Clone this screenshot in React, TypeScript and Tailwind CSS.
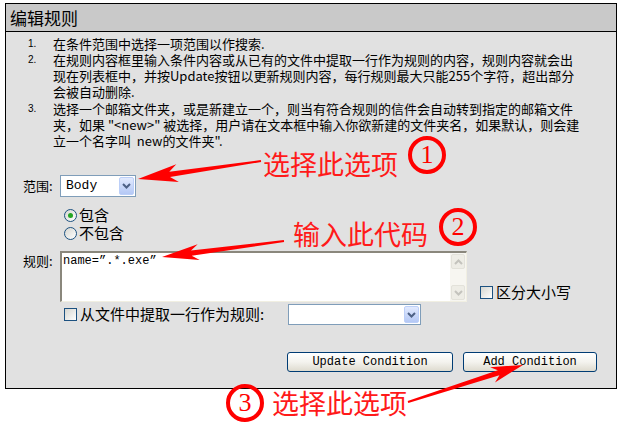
import React from "react";

const cjk = "font-['Noto_Sans_CJK_SC','Noto_Sans',sans-serif]";
const mono = "font-['Liberation_Mono',monospace]";

type Pt = [number, number];

const Chevron = ({ up = false, color = "#4d6185" }: { up?: boolean; color?: string }) => (
  <svg width="9" height="6" viewBox="0 0 9 6">
    <path
      d={up ? "M1 5 L4.5 1.5 L8 5" : "M1 1 L4.5 4.5 L8 1"}
      fill="none"
      stroke={color}
      strokeWidth="2"
    />
  </svg>
);

const ComboBox = ({ value, className }: { value?: string; className: string }) => (
  <div className={`flex items-stretch border border-[#7f9db9] bg-white p-[1px] ${className}`}>
    <span className={`flex flex-1 items-center pl-[4px] text-[13px] text-black ${mono}`}>{value}</span>
    <span className="flex w-[15px] items-center justify-center rounded-[2px] border border-[#bccff8] bg-gradient-to-b from-[#e2eafe] to-[#b4c8f5]">
      <Chevron />
    </span>
  </div>
);

const Radio = ({ checked }: { checked?: boolean }) => (
  <span className="flex h-[13px] w-[13px] items-center justify-center rounded-full border border-[#1c5180] bg-gradient-to-br from-[#d6d6d0] to-white">
    {checked && <span className="h-[5px] w-[5px] rounded-full bg-[#24a524]" />}
  </span>
);

const Checkbox = () => (
  <span className="block h-[13px] w-[13px] border border-[#1c5180] bg-gradient-to-br from-[#d6d6d0] to-white" />
);

const XpButton = ({ label, className }: { label: string; className: string }) => (
  <button
    className={`flex h-[20px] items-center justify-center rounded-[3px] border border-[#003c74] bg-gradient-to-b from-white via-[#f4f3ee] to-[#dedbcf] text-[12px] text-black ${mono} ${className}`}
  >
    {label}
  </button>
);

// tapered red arrow drawn from the tail toward the tip
const Arrow = ({ tip, tail, head, wing }: { tip: Pt; tail: Pt; head: number; wing: number }) => {
  const dx = tail[0] - tip[0];
  const dy = tail[1] - tip[1];
  const len = Math.hypot(dx, dy);
  const ang = (Math.atan2(dy, dx) * 180) / Math.PI;
  const pts: Pt[] = [
    [0, 0],
    [head, -wing],
    [head * 0.8, -2.6],
    [len, -1],
    [len, 1],
    [head * 0.8, 2.6],
    [head, wing],
  ];
  return (
    <polygon
      transform={`translate(${tip[0]} ${tip[1]}) rotate(${ang})`}
      points={pts.map((p) => p.join(",")).join(" ")}
      fill="#ff0000"
    />
  );
};

const Badge = ({ n, className }: { n: string; className: string }) => (
  <div
    className={`absolute flex h-[38px] w-[38px] items-center justify-center rounded-full border-[4px] border-[#ff0000] text-[26px] leading-none text-[#ff0000] font-['Liberation_Serif',serif] ${className}`}
  >
    {n}
  </div>
);

const Note = ({ text, className }: { text: string; className: string }) => (
  <div className={`absolute whitespace-nowrap text-[27px] leading-[27px] text-[#ff1a1a] ${cjk} ${className}`}>
    {text}
  </div>
);

const steps: string[][] = [
  ["在条件范围中选择一项范围以作搜索."],
  [
    "在规则内容框里输入条件内容或从已有的文件中提取一行作为规则的内容，规则内容就会出",
    "现在列表框中，并按Update按钮以更新规则内容，每行规则最大只能255个字符，超出部分",
    "会被自动删除.",
  ],
  [
    "选择一个邮箱文件夹，或是新建立一个，则当有符合规则的信件会自动转到指定的邮箱文件",
    "夹，如果 \"<new>\" 被选择，用户请在文本框中输入你欲新建的文件夹名，如果默认，则会建",
    "立一个名字叫  new的文件夹\".",
  ],
];

export default function App() {
  return (
    <div className={`relative h-[427px] w-[621px] overflow-hidden bg-white text-black ${cjk}`}>
      <div className="ml-[5px] mt-[3px] w-[612px] border border-black">
        <div className="flex h-[28px] items-center border-b border-black bg-[#c9c9c9] pl-[4px] text-[17px]">
          编辑规则
        </div>

        <div className="h-[356px] bg-[#e1e1e1] pt-[4px]">
          <div className="flex flex-col">
            {steps.map((lines, i) => (
              <div key={i} className={`flex pl-[22px] ${i === 2 ? "mt-[1px]" : ""}`}>
                <span className="w-[25px] text-[10px] leading-[16px] font-['Liberation_Sans',sans-serif]">
                  {i + 1}.
                </span>
                <div className="flex flex-col text-[13px] leading-[16px]">
                  {lines.map((l) => (
                    <span key={l} className="whitespace-pre">
                      {l}
                    </span>
                  ))}
                </div>
              </div>
            ))}
          </div>

          <div className="mt-[26px] flex h-[22px] items-center pl-[17px]">
            <span className="w-[37px] text-[13px]">范围:</span>
            <ComboBox value="Body" className="h-[22px] w-[76px]" />
          </div>

          <div className="mt-[9px] flex flex-col pl-[58px] text-[15px]">
            <label className="flex h-[18px] items-center gap-[2px]">
              <Radio checked />
              包含
            </label>
            <label className="flex h-[18px] items-center gap-[2px]">
              <Radio />
              不包含
            </label>
          </div>

          <div className="mt-[9px] flex pl-[17px]">
            <span className="w-[37px] text-[13px] leading-[20px]">规则:</span>
            <div className="flex h-[51px] w-[407px] border-b border-l-2 border-r border-t-2 border-b-[#f1efe2] border-l-[#8a877c] border-r-[#f1efe2] border-t-[#8a877c] bg-white">
              <div className={`flex-1 pl-[1px] text-[12px] leading-[16px] ${mono}`}>name=”.*.exe”</div>
              <div className="flex w-[16px] flex-col justify-between bg-[#f7f6f1] p-[1px]">
                <span className="flex h-[15px] items-center justify-center rounded-[2px] border border-[#e3e2da] bg-[#eeede6]">
                  <Chevron up color="#c4c3bd" />
                </span>
                <span className="flex h-[15px] items-center justify-center rounded-[2px] border border-[#e3e2da] bg-[#eeede6]">
                  <Chevron color="#c4c3bd" />
                </span>
              </div>
            </div>
            <label className="mb-[1px] ml-[13px] flex h-[18px] items-center gap-[3px] self-end text-[15px]">
              <Checkbox />
              区分大小写
            </label>
          </div>

          <div className="mt-[2px] flex h-[21px] items-center pl-[58px]">
            <Checkbox />
            <span className="ml-[3px] w-[208px] text-[15px]">从文件中提取一行作为规则:</span>
            <ComboBox className="h-[21px] w-[133px]" />
          </div>

          <div className="mt-[27px] flex pl-[281px]">
            <XpButton label="Update Condition" className="w-[166px]" />
            <XpButton label="Add Condition" className="ml-[10px] w-[134px]" />
          </div>
        </div>
      </div>

      <svg className="pointer-events-none absolute left-0 top-0" width="621" height="427">
        <Arrow tip={[138, 179]} tail={[261, 161]} head={40} wing={9} />
        <Arrow tip={[162, 257]} tail={[284, 241]} head={37} wing={8} />
        <Arrow tip={[523, 365]} tail={[408, 402]} head={32} wing={8} />
      </svg>

      <Note text="选择此选项" className="left-[263px] top-[150px]" />
      <Badge n="1" className="left-[408px] top-[136px]" />
      <Note text="输入此代码" className="left-[293px] top-[220px]" />
      <Badge n="2" className="left-[439px] top-[208px]" />
      <Badge n="3" className="left-[226px] top-[384px]" />
      <Note text="选择此选项" className="left-[272px] top-[389px]" />
    </div>
  );
}
